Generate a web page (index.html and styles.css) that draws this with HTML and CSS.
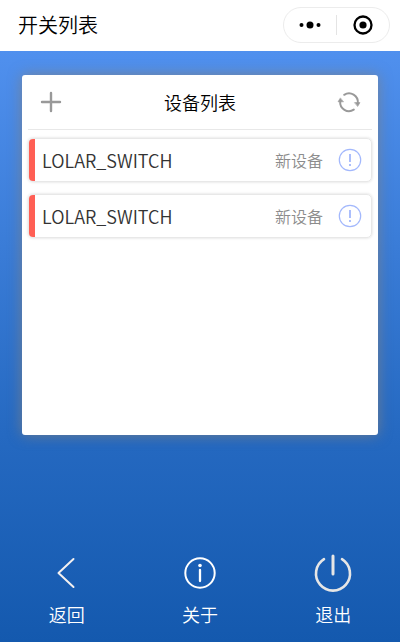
FILE: index.html
```html
<!DOCTYPE html>
<html lang="zh-CN">
<head>
<meta charset="utf-8">
<meta name="viewport" content="width=device-width, initial-scale=1">
<title>开关列表</title>
<link rel="stylesheet" href="styles.css">
</head>
<body>
<header class="topbar">
  <h1 class="topbar-title">开关列表</h1>
  <div class="capsule">
    <button class="capsule-button" type="button" aria-label="更多">
      <svg width="24" height="20" viewBox="0 0 24 20"><circle cx="3.5" cy="10" r="2"/><circle cx="12" cy="10" r="3.5"/><circle cx="20.5" cy="10" r="2"/></svg>
    </button>
    <button class="capsule-button" type="button" aria-label="关闭">
      <svg width="20" height="20" viewBox="0 0 20 20"><circle cx="10" cy="10" r="8.5" fill="none" stroke="#000" stroke-width="2.3"/><circle cx="10" cy="10" r="3.6"/></svg>
    </button>
  </div>
</header>
<main class="screen">
  <section class="card">
    <div class="card-head">
      <button class="icon-button" type="button" aria-label="添加">
        <svg width="24" height="24" viewBox="0 0 24 24" fill="none" stroke="#999" stroke-width="2.4" stroke-linecap="round"><path d="M12 3v18M3 12h18"/></svg>
      </button>
      <h2 class="card-title">设备列表</h2>
      <button class="icon-button" type="button" aria-label="刷新">
        <svg width="24" height="24" viewBox="0 0 24 24" fill="none" stroke="#999" stroke-width="2" stroke-linecap="round"><path d="M7.200 4.800A8.800 8.800 0 0 1 20.800 13M16.800 19.600A8.800 8.800 0 0 1 3.200 11.400"/><path d="M17.800 12.600h5.200l-2.200 3.600zM6.200 11.800H1l2.200-3.600z" fill="#999" stroke-width=".6"/></svg>
      </button>
    </div>
    <ul class="device-list">
      <li class="device">
        <span class="device-name">LOLAR_SWITCH</span>
        <span class="device-state">新设备</span>
        <button class="icon-button" type="button" aria-label="设备信息">
          <svg width="24" height="24" viewBox="0 0 24 24" fill="none" stroke="#a3b8fc"><circle cx="12" cy="12" r="10.700" stroke-width="1.200"/><path d="M12 6v8M12 16v2" stroke-width="1.800"/></svg>
        </button>
      </li>
      <li class="device">
        <span class="device-name">LOLAR_SWITCH</span>
        <span class="device-state">新设备</span>
        <button class="icon-button" type="button" aria-label="设备信息">
          <svg width="24" height="24" viewBox="0 0 24 24" fill="none" stroke="#a3b8fc"><circle cx="12" cy="12" r="10.700" stroke-width="1.200"/><path d="M12 6v8M12 16v2" stroke-width="1.800"/></svg>
        </button>
      </li>
    </ul>
  </section>
  <nav class="actions">
    <button class="action" type="button">
      <svg width="40" height="40" viewBox="0 0 40 40" fill="none" stroke="#f3f0f0" stroke-width="2" stroke-linecap="round" stroke-linejoin="round"><path d="M26.500 6L11.500 20l15 14"/></svg>
      <span>返回</span>
    </button>
    <button class="action" type="button">
      <svg width="40" height="40" viewBox="0 0 40 40" fill="none" stroke="#fff" stroke-width="2"><circle cx="20" cy="20" r="14.700"/><path d="M20 17v11" stroke-width="2.300" stroke-linecap="round"/><circle cx="20" cy="12.500" r="1.800" fill="#fff" stroke="none"/></svg>
      <span>关于</span>
    </button>
    <button class="action" type="button">
      <svg width="40" height="40" viewBox="0 0 40 40" fill="none" stroke="#e6e6e6" stroke-width="2.600" stroke-linecap="round"><path d="M11 6.200A17 17 0 1 0 29 6.200"/><path d="M20 3v18" stroke-width="3"/></svg>
      <span>退出</span>
    </button>
  </nav>
</main>
</body>
</html>
```
FILE: styles.css
```css
* {
  box-sizing: border-box;
}

body {
  margin: 0;
  min-height: 100vh;
  display: flex;
  flex-direction: column;
  background: #fff;
  color: #000;
  font-family: "Noto Sans CJK SC", sans-serif;
  font-weight: 350;
}

h1,
h2,
ul {
  margin: 0;
  padding: 0;
  font-weight: 350;
  list-style: none;
}

button {
  margin: 0;
  padding: 0;
  border: 0;
  background: none;
  color: inherit;
  font: inherit;
}

svg {
  display: block;
}

.topbar {
  display: flex;
  align-items: center;
  justify-content: space-between;
  height: 51px;
  padding: 0 10px 2px 18px;
}

.topbar-title {
  font-size: 20px;
  line-height: 28px;
}

.capsule {
  display: flex;
  align-items: center;
  width: 107px;
  height: 36px;
  border: 1px solid #ececec;
  border-radius: 18px;
}

.capsule-button {
  flex: 1;
  display: flex;
  justify-content: center;
}

.capsule-button + .capsule-button {
  border-left: 1px solid #e4e4e4;
}

.screen {
  flex: 1;
  display: flex;
  flex-direction: column;
  justify-content: space-between;
  padding: 24px 22px 16px;
  background: linear-gradient(#5090ee, #2569c1 65%, #1459ae);
}

.card {
  min-height: 360px;
  padding: 0 6px;
  border-radius: 3px;
  background: #fff;
  box-shadow: 0 0 14px rgba(128, 128, 128, 0.8);
}

.card-head {
  display: flex;
  align-items: center;
  justify-content: space-between;
  height: 55px;
  padding: 0 11px;
  border-bottom: 1px solid #e8e8e8;
}

.card-title {
  font-size: 18px;
  line-height: 24px;
}

.device-list {
  display: grid;
  gap: 12px;
  padding-top: 8px;
}

.device {
  display: flex;
  align-items: center;
  gap: 15px;
  height: 44px;
  padding-right: 9px;
  border: 1px solid #e8e8e8;
  border-radius: 5px;
  box-shadow: 0 0 3px rgba(0, 0, 0, 0.16);
}

.device::before {
  content: "";
  align-self: stretch;
  width: 6px;
  margin-right: -15px;
  border-radius: 4px 0 0 4px;
  background: #ff5f55;
}

.device-name {
  flex: 1;
  padding-left: 7px;
  color: #333;
  font-size: 18px;
  line-height: 24px;
}

.device-state {
  color: #8c8c8c;
  font-size: 16px;
  line-height: 24px;
}

.actions {
  display: grid;
  grid-template-columns: repeat(3, 1fr);
  margin: 0 -22px;
  color: #fff;
}

.action {
  display: flex;
  flex-direction: column;
  align-items: center;
  gap: 9px;
  font-size: 18px;
  line-height: 24px;
}
```
